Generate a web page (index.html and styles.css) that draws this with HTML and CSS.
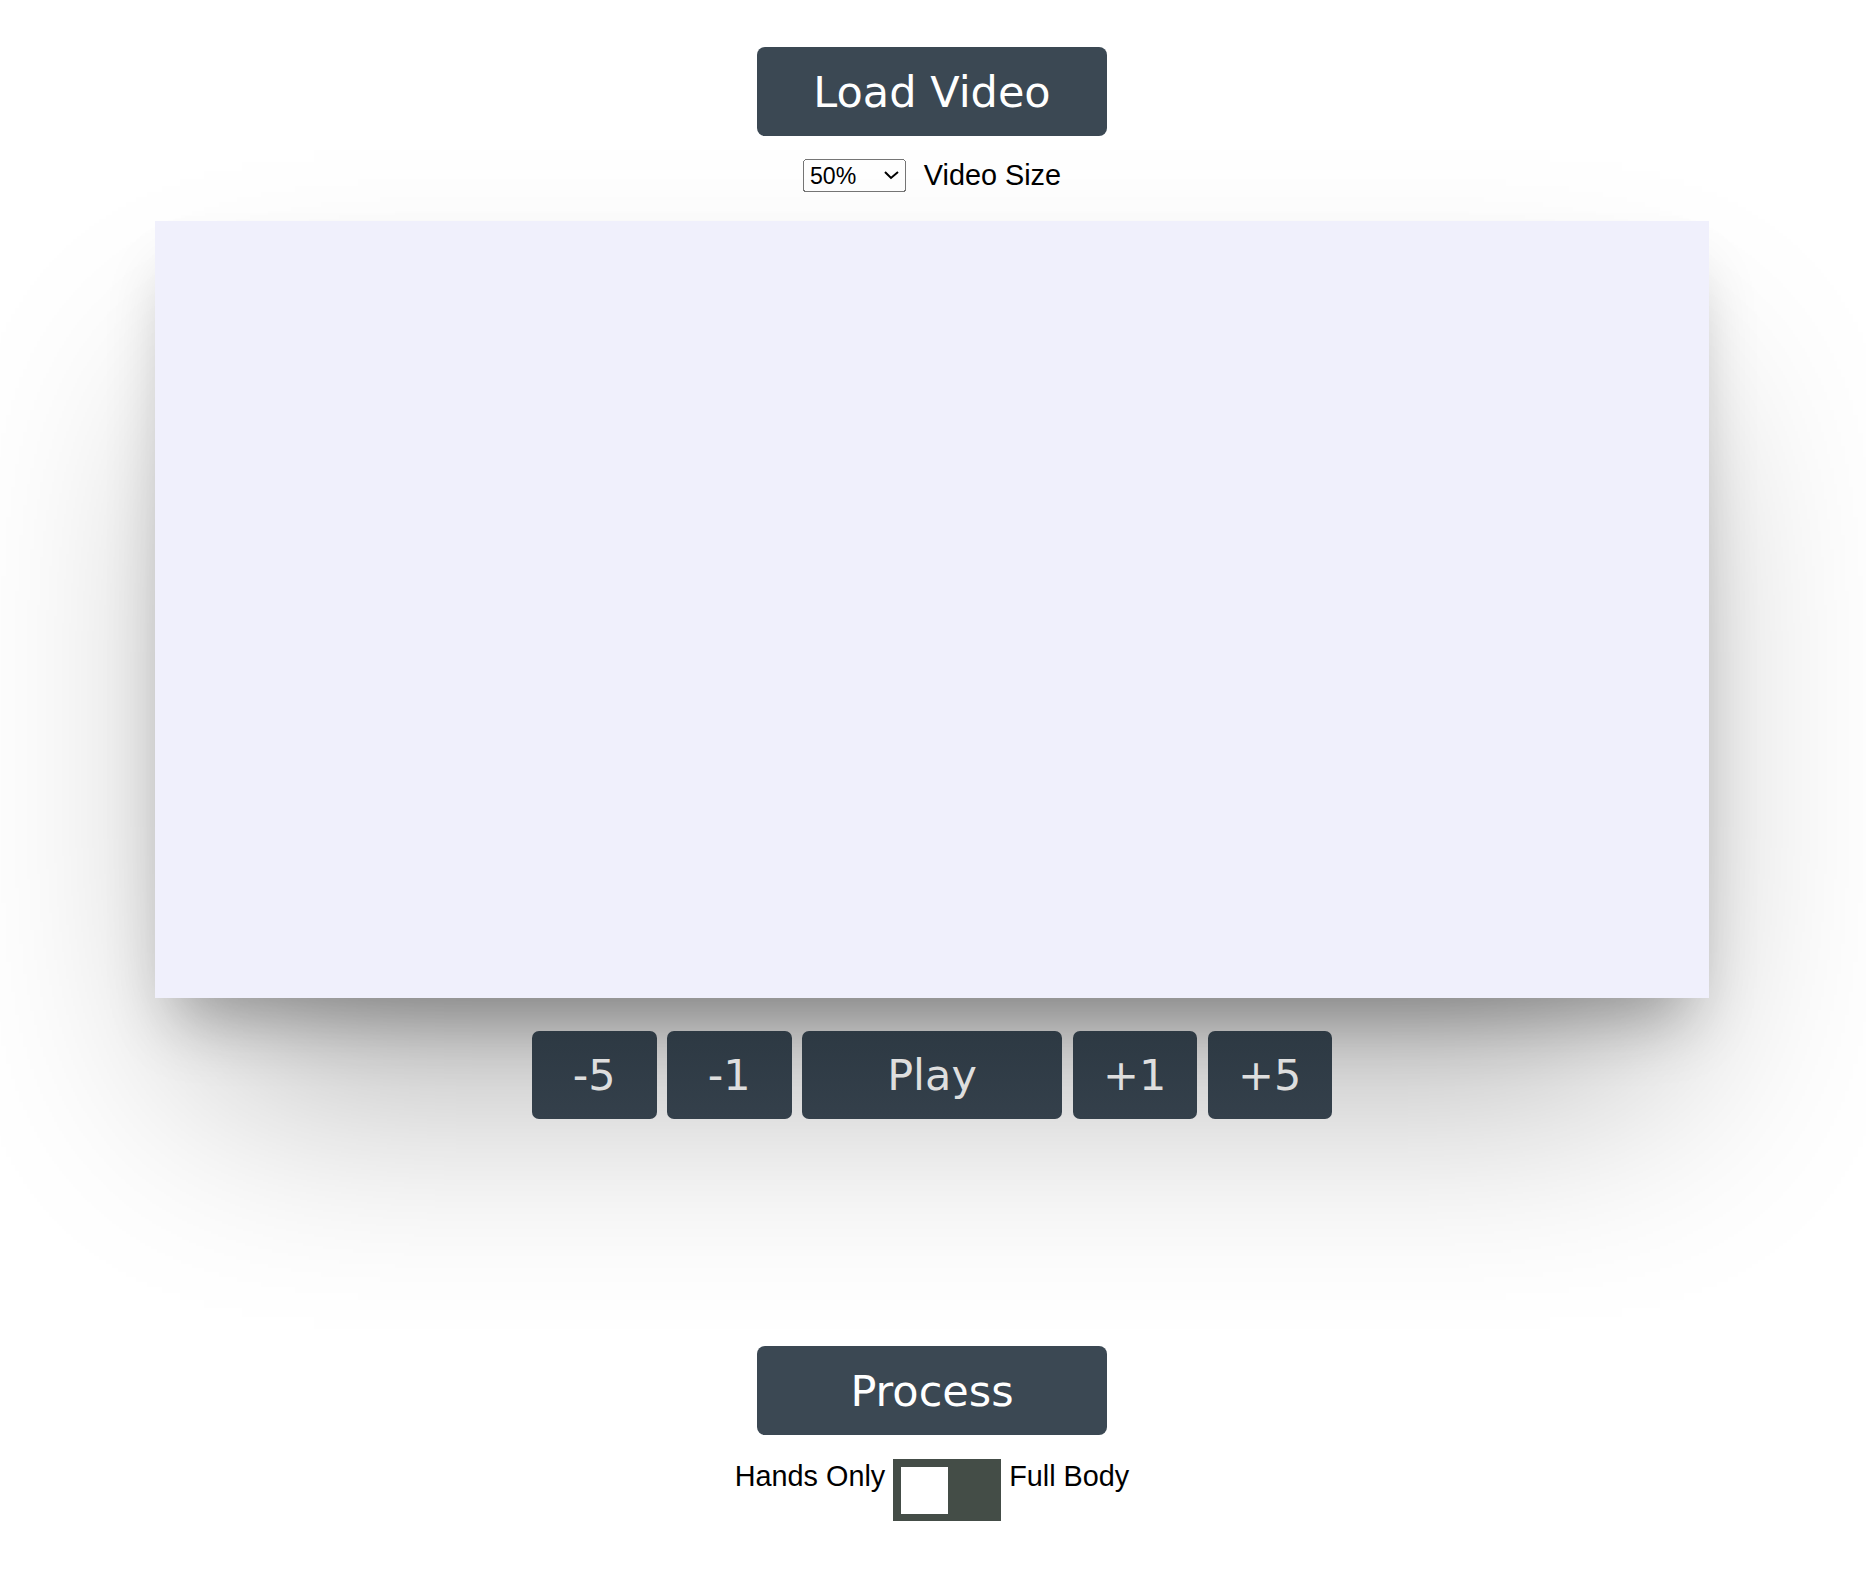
FILE: index.html
```html
<!DOCTYPE html>
<html lang="en">
<head>
<meta charset="utf-8">
<title>Video Tool</title>
<link rel="stylesheet" href="styles.css">
</head>
<body>
<main class="page">
  <button class="btn-main">Load Video</button>
  <div class="size-row">
    <select class="size-select">
      <option>25%</option>
      <option selected>50%</option>
      <option>75%</option>
      <option>100%</option>
    </select>
    <span class="size-label">Video Size</span>
  </div>
  <div class="video"></div>
  <div class="controls">
    <button class="ctl">-5</button>
    <button class="ctl">-1</button>
    <button class="ctl play">Play</button>
    <button class="ctl">+1</button>
    <button class="ctl">+5</button>
  </div>
  <button class="btn-main process">Process</button>
  <div class="mode-row">
    <span class="mode-label">Hands Only</span>
    <span class="toggle"><span class="knob"></span></span>
    <span class="mode-label">Full Body</span>
  </div>
</main>
</body>
</html>
```
FILE: styles.css
```css
html, body {
  margin: 0;
  padding: 0;
  background: #ffffff;
}

body {
  font-family: "Liberation Sans", Arial, sans-serif;
  color: #000;
}

.page {
  display: flex;
  flex-direction: column;
  align-items: center;
  padding-top: 47px;
  padding-right: 2px;
}

.btn-main {
  width: 350px;
  height: 89px;
  border: none;
  border-radius: 8px;
  background: #3b4853;
  color: #ffffff;
  font-family: "DejaVu Sans", Verdana, sans-serif;
  font-size: 43px;
  padding: 0;
  margin: 0;
}

.size-row {
  margin-top: 23px;
  height: 33px;
  display: flex;
  align-items: center;
  gap: 18px;
}

.size-select {
  zoom: 1.7;
  font-family: "Liberation Sans", Arial, sans-serif;
  font-size: 13.6px;
  width: 60.5px;
  height: 19.5px;
  margin: 0;
}

.size-label {
  font-size: 28.8px;
}

.video {
  margin-top: 29px;
  width: 1554px;
  height: 777px;
  background: #f0f0fc;
  box-shadow:
    0 40px 60px -20px rgba(0, 0, 0, 0.3),
    0 130px 220px -50px rgba(0, 0, 0, 0.33);
}

.controls {
  margin-top: 33px;
  display: flex;
  gap: 10.5px;
}

.ctl {
  width: 124.5px;
  height: 88px;
  border: none;
  border-radius: 7px;
  background: linear-gradient(#2d3943, #34404b);
  color: #dedede;
  font-family: "DejaVu Sans", Verdana, sans-serif;
  font-size: 43px;
  padding: 0;
  margin: 0;
}

.ctl.play {
  width: 260px;
}

.process {
  margin-top: 227px;
}

.mode-row {
  margin-top: 24px;
  display: flex;
  align-items: flex-start;
  gap: 8px;
}

.mode-label {
  font-size: 28.8px;
  line-height: 33px;
  padding-top: 1px;
}

.toggle {
  display: block;
  box-sizing: border-box;
  width: 108px;
  height: 62px;
  padding: 7.5px;
  background: #444d47;
}

.knob {
  display: block;
  width: 47px;
  height: 47px;
  background: #ffffff;
}
```
